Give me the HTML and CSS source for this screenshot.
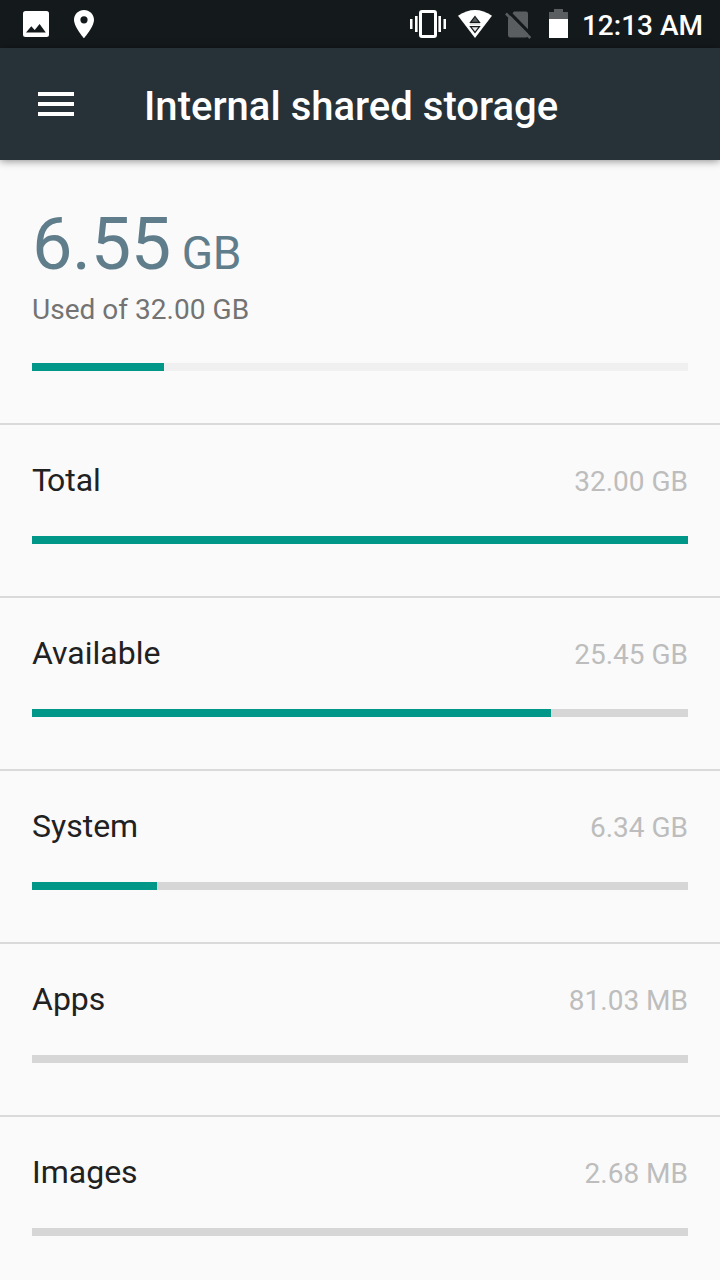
FILE: index.html
```
<!DOCTYPE html>
<html lang="en">
<head>
  <meta charset="UTF-8" />
  <meta name="viewport" content="width=device-width, initial-scale=1.0" />
  <title>Internal shared storage</title>
  <link rel="stylesheet" href="styles.css">
</head>
<body>
  <div class="status-bar">
    <div class="status-left">
      <svg width="26" height="26" viewBox="0 0 26 26">
        <rect width="26" height="26" rx="2.5" fill="#fff"/>
        <path d="M3 21.5 L8.3 15.2 L11.7 19 L16.6 13 L22.8 21.5 Z" fill="#14191c"/>
      </svg>
      <svg width="20" height="29" viewBox="0 0 20 29">
        <path fill="#fff" fill-rule="evenodd" d="M10 0 C4.5 0 0 4.3 0 9.8 C0 17 10 28.3 10 28.3 S20 17 20 9.8 C20 4.3 15.5 0 10 0 Z M10 6.2 a3.6 3.6 0 1 1 0 7.2 a3.6 3.6 0 0 1 0 -7.2 Z"/>
      </svg>
    </div>
    <div class="status-right">
      <svg class="icon-vibrate" width="36" height="28" viewBox="0 0 36 28">
        <rect x="10.5" y="1.5" width="15" height="25" rx="1.5" fill="none" stroke="#fff" stroke-width="3"/>
        <path fill="#fff" d="M0 9h2.5v10H0zM5 6h2.6v16H5zM28.4 6h2.6v16h-2.6zM33.5 9h2.5v10h-2.5z"/>
      </svg>
      <svg class="icon-wifi" width="34" height="28" viewBox="0 0 34 28">
        <path fill="#fff" d="M0 5.7 Q17 -5.7 34 5.7 L17 28 Z"/>
        <path fill="#5b5e60" stroke="#14191c" stroke-width="1.2" d="M17 6.5 L21.5 12.3 H12.5 Z"/>
        <path fill="#c4c5c6" d="M12 13.3h10v1.2H12z"/>
        <path fill="#e4e4e4" stroke="#14191c" stroke-width="1.2" d="M12.5 16.6 H21.5 L17 22.4 Z"/>
      </svg>
      <svg class="icon-sim" width="27" height="28" viewBox="0 0 27 28">
        <path fill="#5b5e60" d="M9 .5 H21 Q23 .5 23 2.5 V24 Q23 26.5 20.5 26.5 H5.5 Q3 26.5 3 24 V7.5 Z"/>
        <path stroke="#14191c" stroke-width="3.2" d="M3 0 L27 24.5"/>
        <path stroke="#5b5e60" stroke-width="2.6" d="M1 2.5 L25.3 27"/>
      </svg>
      <svg class="icon-battery" width="19" height="29" viewBox="0 0 19 29">
        <path fill="#5b5e60" d="M5 0h9v3h5v7H0V3h5z"/>
        <path fill="#fff" d="M0 10h19v19H0z"/>
      </svg>
      <span class="clock">12:13 AM</span>
    </div>
  </div>

  <div class="toolbar">
    <svg width="36" height="24" viewBox="0 0 36 24">
      <path fill="#fff" d="M0 0h36v4H0zM0 10h36v4H0zM0 20h36v4H0z"/>
    </svg>
    <h1>Internal shared storage</h1>
  </div>

  <div class="summary">
    <div class="used">6.55<span class="unit">GB</span></div>
    <div class="used-of">Used of 32.00 GB</div>
    <div class="bar bar-light"><div class="fill" style="width: 132px"></div></div>
  </div>

  <div class="row">
    <div class="row-head"><span><span class="kern">T</span>otal</span><span class="size">32.00 GB</span></div>
    <div class="bar"><div class="fill" style="width: 100%"></div></div>
  </div>
  <div class="row">
    <div class="row-head"><span>Available</span><span class="size">25.45 GB</span></div>
    <div class="bar"><div class="fill" style="width: 519px"></div></div>
  </div>
  <div class="row">
    <div class="row-head"><span>System</span><span class="size">6.34 GB</span></div>
    <div class="bar"><div class="fill" style="width: 125px"></div></div>
  </div>
  <div class="row">
    <div class="row-head"><span>Apps</span><span class="size">81.03 MB</span></div>
    <div class="bar"></div>
  </div>
  <div class="row">
    <div class="row-head"><span>Images</span><span class="size">2.68 MB</span></div>
    <div class="bar"></div>
  </div>
</body>
</html>
```
FILE: styles.css
```
* { box-sizing: border-box; }
body { font-family: Roboto, sans-serif; background: #fafafa; color: #212121; margin: 0; height: 1280px; overflow: hidden; }
svg { display: block; flex: none; }

.status-bar { display: flex; justify-content: space-between; height: 48px; padding: 0 17px 0 23px; background: #14191c; color: #fff; }
.status-left { display: flex; align-items: flex-start; gap: 25px; padding-top: 10px; }
.status-left svg:first-child { margin-top: 1px; }
.status-right { display: flex; align-items: flex-start; padding-top: 10px; }
.icon-wifi { margin-left: 12px; }
.icon-sim { margin: 1px 0 0 13px; }
.icon-battery { margin: -1px 0 0 17px; }
.clock { margin-left: 14px; font-size: 28px; font-weight: 500; line-height: 32px; white-space: nowrap; }

.toolbar { display: flex; align-items: center; gap: 70px; height: 112px; padding-left: 38px; background: #273238; color: #fff; box-shadow: 0 1px 8px rgba(0, 0, 0, 0.45); }
.toolbar h1 { margin: 6px 0 0; font-size: 40px; font-weight: 500; line-height: 48px; letter-spacing: 0.02px; white-space: nowrap; }

.summary { height: 265px; padding: 43px 32px 0; border-bottom: 2px solid #dadada; }
.used { font-size: 72px; line-height: 84px; height: 84px; letter-spacing: -0.4px; color: #607d8b; white-space: nowrap; }
.unit { margin-left: 11px; font-size: 46px; line-height: 1; }
.used-of { margin: 6px 0 36px; font-size: 28px; line-height: 34px; letter-spacing: 0.03px; color: #737373; }

.row { height: 173px; padding: 36px 32px 0; border-bottom: 2px solid #dadada; }
.row-head { display: flex; justify-content: space-between; align-items: baseline; height: 38px; margin-bottom: 37px; font-size: 32px; line-height: 38px; }
.kern { letter-spacing: -4.2px; }
.size { font-size: 28px; color: #bdbdbd; }

.bar { height: 8px; background: #d6d6d6; }
.bar-light { background: #f0f0f0; }
.fill { height: 8px; background: #009688; }
```
